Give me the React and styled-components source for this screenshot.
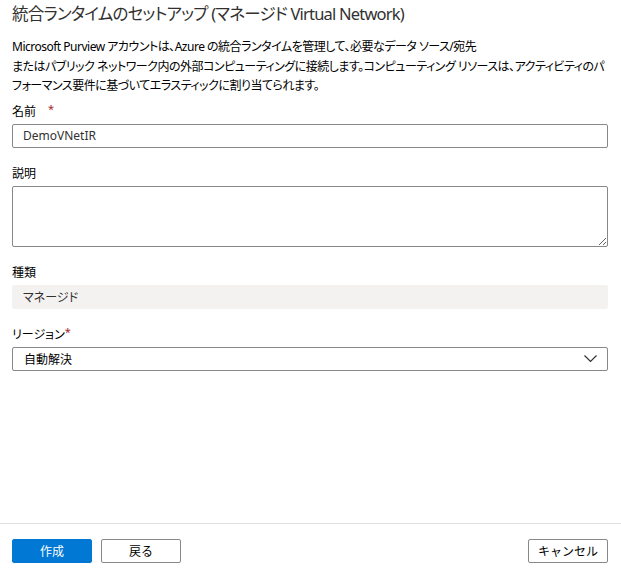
import React from 'react';
import styled, { createGlobalStyle } from 'styled-components';

const GlobalStyle = createGlobalStyle`
    html, body {
        margin: 0;
        padding: 0;
        background: #ffffff;
    }
    body {
        font-family: "Noto Sans", "Noto Sans CJK JP", sans-serif;
        color: #323130;
    }
`;

const ChevronDown = () => (
    <svg width="13" height="8" viewBox="0 0 13 8">
        <polyline points="0.5,0.5 6.5,6.5 12.5,0.5" fill="none" stroke="#323130" strokeWidth="1.2" />
    </svg>
);

const App = () => {
    return (
        <Page>
            <GlobalStyle />
            <Main>
                <Title>統合ランタイムのセットアップ (マネージド Virtual Network)</Title>

                <Intro>
                    <span>Microsoft Purview アカウントは、Azure の統合ランタイムを管理して、必要なデータ ソース/宛先</span>
                    <span>またはパブリック ネットワーク内の外部コンピューティングに接続します。コンピューティング リソースは、アクティビティのパ</span>
                    <span>フォーマンス要件に基づいてエラスティックに割り当てられます。</span>
                </Intro>

                <Field first>
                    <Label>
                        名前<Required gap={12}>*</Required>
                    </Label>
                    <TextInput defaultValue="DemoVNetIR" />
                </Field>

                <Field>
                    <Label>説明</Label>
                    <TextArea />
                </Field>

                <Field>
                    <Label>種類</Label>
                    <ReadOnly>マネージド</ReadOnly>
                </Field>

                <Field>
                    <Label>
                        リージョン<Required gap={0}>*</Required>
                    </Label>
                    <Select>
                        <span>自動解決</span>
                        <ChevronDown />
                    </Select>
                </Field>
            </Main>

            <Footer>
                <Button primary>作成</Button>
                <Button>戻る</Button>
                <Spacer />
                <Button>キャンセル</Button>
            </Footer>
        </Page>
    );
};

const Page = styled.div`
    display: flex;
    flex-direction: column;
    width: 621px;
    height: 571px;
    font-feature-settings: "palt";
`;

const Main = styled.div`
    flex: 1;
    display: flex;
    flex-direction: column;
    padding: 0 13px 0 12px;
`;

const Title = styled.h1`
    margin: 0;
    height: 28px;
    line-height: 28px;
    font-size: 16.5px;
    font-weight: 400;
    letter-spacing: -0.8px;
    color: #323130;
    white-space: nowrap;
`;

const Intro = styled.div`
    display: flex;
    flex-direction: column;
    margin-top: 9px;
    font-size: 12px;
    line-height: 19.5px;
    color: #000000;
    white-space: nowrap;
    letter-spacing: -0.5px;
`;

const Field = styled.div`
    display: flex;
    flex-direction: column;
    gap: 3px;
    margin-top: ${props => props.first ? '5px' : '15px'};
`;

const Label = styled.div`
    display: flex;
    align-items: center;
    height: 20px;
    font-size: 12px;
    color: #000000;
`;

const Required = styled.span`
    margin-left: ${props => props.gap}px;
    margin-top: -4px;
    color: #a4262c;
    font-size: 11px;
`;

const TextInput = styled.input`
    box-sizing: border-box;
    height: 24px;
    width: 100%;
    margin: 0;
    padding: 0 10px;
    border: 1px solid #8a8886;
    border-radius: 2px;
    font-family: inherit;
    font-size: 12px;
    color: #323130;
    outline: none;
`;

const TextArea = styled.textarea`
    box-sizing: border-box;
    display: block;
    height: 61px;
    width: 100%;
    margin: 0;
    padding: 6px 10px;
    border: 1px solid #8a8886;
    border-radius: 2px;
    font-family: inherit;
    font-size: 12px;
    outline: none;
`;

const ReadOnly = styled.div`
    box-sizing: border-box;
    display: flex;
    align-items: center;
    height: 24px;
    padding: 0 11px;
    background: #f3f2f1;
    border-radius: 2px;
    font-size: 12px;
    color: #323130;
`;

const Select = styled.div`
    box-sizing: border-box;
    display: flex;
    align-items: center;
    justify-content: space-between;
    height: 24px;
    padding: 0 10px 0 11px;
    border: 1px solid #8a8886;
    border-radius: 2px;
    font-size: 12px;
    color: #000000;
`;

const Footer = styled.div`
    display: flex;
    align-items: center;
    gap: 9px;
    padding: 15px 13px 8px 12px;
    border-top: 1px solid #e1dfdd;
`;

const Spacer = styled.div`
    flex: 1;
`;

const Button = styled.button`
    box-sizing: border-box;
    width: 80px;
    height: 24px;
    margin: 0;
    padding: 0;
    border: 1px solid ${props => props.primary ? '#0078d4' : '#8a8886'};
    border-radius: 2px;
    background: ${props => props.primary ? '#0078d4' : '#ffffff'};
    color: ${props => props.primary ? '#ffffff' : '#000000'};
    font-family: inherit;
    font-size: 12px;
    cursor: pointer;
`;

export default App;
